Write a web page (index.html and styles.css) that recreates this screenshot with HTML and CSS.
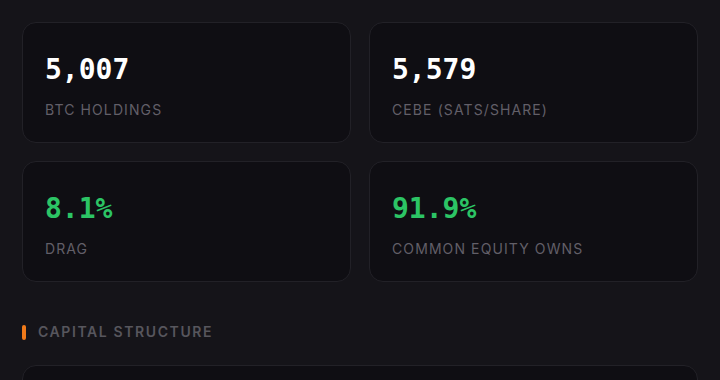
FILE: index.html
```html
<!DOCTYPE html>
<html lang="en">
  <head>
    <meta charset="UTF-8" />
    <meta name="viewport" content="width=device-width, initial-scale=1.0" />
    <title>Treasury Dashboard</title>
    <link rel="stylesheet" href="styles.css">
  </head>
  <body>
    <div class="stat-grid">
      <div class="stat-card">
        <p class="stat-value">5,007</p>
        <p class="stat-label">BTC Holdings</p>
      </div>
      <div class="stat-card">
        <p class="stat-value">5,579</p>
        <p class="stat-label">CEBE (sats/share)</p>
      </div>
      <div class="stat-card">
        <p class="stat-value stat-green">8.1%</p>
        <p class="stat-label">Drag</p>
      </div>
      <div class="stat-card">
        <p class="stat-value stat-green">91.9%</p>
        <p class="stat-label">Common Equity Owns</p>
      </div>
    </div>
    <h2 class="section-title">Capital Structure</h2>
    <div class="structure-card"></div>
  </body>
</html>
```

FILE: styles.css
```css
body {
  margin: 0;
  padding: 22px;
  background: #151419;
  font-family: Inter, "Noto Sans", sans-serif;
  color: #fff;
  overflow: hidden;
}
.stat-grid {
  display: grid;
  grid-template-columns: 1fr 1fr;
  gap: 18px;
}
.stat-card {
  height: 121px;
  box-sizing: border-box;
  padding: 30px 22px 0 22px;
  background: #0f0e13;
  border: 1px solid #222127;
  border-radius: 14px;
}
.stat-value {
  margin: 0;
  font-family: "DejaVu Sans Mono", "Liberation Mono", monospace;
  font-weight: 700;
  font-size: 28px;
  line-height: 34px;
  color: #ffffff;
}
.stat-green {
  color: #2cc465;
}
.stat-label {
  margin: 14px 0 0 0;
  font-size: 14px;
  line-height: 18px;
  letter-spacing: 1.1px;
  text-transform: uppercase;
  color: #625f68;
}
.section-title {
  display: flex;
  align-items: center;
  gap: 12px;
  margin: 41px 0 0 0;
  font-size: 14px;
  line-height: 18px;
  font-weight: 600;
  letter-spacing: 1.6px;
  text-transform: uppercase;
  color: #57565d;
}
.section-title::before {
  content: "";
  width: 4px;
  height: 15px;
  border-radius: 2px;
  background: #f07a1a;
}
.structure-card {
  margin-top: 24px;
  height: 120px;
  background: #0f0e13;
  border: 1px solid #222127;
  border-radius: 14px;
}
```
